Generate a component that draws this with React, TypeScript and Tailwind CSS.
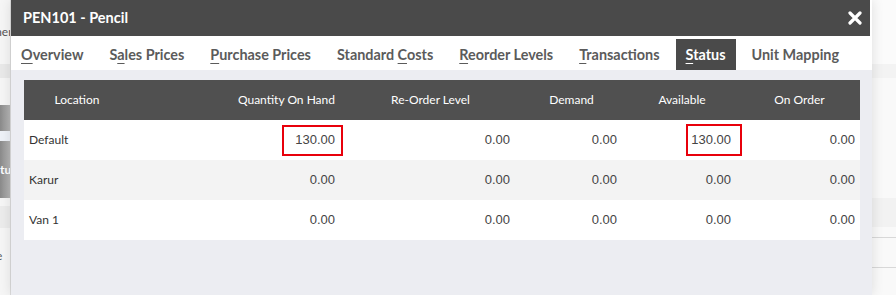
import React from "react";

const rows = [
  { name: "Default", qty: "130.00", reorder: "0.00", demand: "0.00", available: "130.00", onOrder: "0.00", mark: true },
  { name: "Karur", qty: "0.00", reorder: "0.00", demand: "0.00", available: "0.00", onOrder: "0.00", mark: false },
  { name: "Van 1", qty: "0.00", reorder: "0.00", demand: "0.00", available: "0.00", onOrder: "0.00", mark: false },
];

function Tab({ label, u, rest, pre = "", active = false }: { label?: string; u?: string; rest?: string; pre?: string; active?: boolean }) {
  return (
    <div
      className={`h-[31px] px-[10px] flex items-center text-[14.4px] font-bold ${
        active ? "bg-[#4a4a4a] text-white" : "text-[#5b5b5b]"
      }`}
    >
      {label ? (
        label
      ) : (
        <span>
          {pre}
          <span className="underline underline-offset-[3px]">{u}</span>
          {rest}
        </span>
      )}
    </div>
  );
}

export default function App() {
  const num = "font-['Liberation_Sans',Arial,sans-serif] text-[13px] text-[#444]";
  const head = "h-[40px] bg-[#505050] text-white text-[12px] flex items-center";
  return (
    <div className="w-[896px] h-[295px] flex overflow-hidden bg-white font-['Lato','Noto_Sans',sans-serif]">
      {/* page behind the dialog, left edge */}
      <div className="w-[11px] flex flex-col bg-[#f6f6f6] border-r border-[#dcdcdc] text-[12px] text-[#555] overflow-hidden">
        <div className="h-[24px]"></div>
        <div className="h-[16px] leading-[16px] -ml-[8px]">men</div>
        <div className="h-[24px]"></div>
        <div className="h-[14px] bg-[#e9e9e9]"></div>
        <div className="h-[27px]"></div>
        <div className="h-[26px] bg-gradient-to-r from-[#8a8a8a] to-[#b5b5b5]"></div>
        <div className="h-[10px] bg-[#eef2f8]"></div>
        <div className="h-[57px] bg-gradient-to-r from-[#8a8a8a] to-[#b5b5b5] flex items-center text-white font-bold">
          <span className="-ml-[6px]">atu</span>
        </div>
        <div className="h-[8px]"></div>
        <div className="h-[22px] bg-[#ececec]"></div>
        <div className="h-[20px]"></div>
        <div className="leading-[16px] -ml-[4px]">e</div>
      </div>

      {/* dialog */}
      <div className="w-[861px] flex flex-col shadow-[0_0_12px_rgba(0,0,0,0.12)] z-10">
        <div className="h-[36px] bg-[#4a4a4a] flex items-center justify-between pl-[12px] pr-[8px] mr-[2px]">
          <span className="text-white font-bold text-[14.5px]">PEN101 - Pencil</span>
          <svg width="14" height="14" viewBox="0 0 14 14">
            <path d="M2 2 L12 12 M12 2 L2 12" stroke="white" strokeWidth="3.2" strokeLinecap="round" />
          </svg>
        </div>
        <div className="h-[34px] bg-white flex items-end gap-[6px]">
          <Tab u="O" rest="verview" />
          <Tab pre="S" u="a" rest="les Prices" />
          <Tab u="P" rest="urchase Prices" />
          <Tab pre="Standard " u="C" rest="osts" />
          <Tab u="R" rest="eorder Levels" />
          <Tab u="T" rest="ransactions" />
          <Tab u="S" rest="tatus" active />
          <Tab label="Unit Mapping" />
        </div>
        <div className="flex-1 bg-[#ecedf2] pt-[10px] pl-[13px] pr-[12px]">
          <div className="grid grid-cols-[106px_213px_175px_107px_114px_121px]">
            <div className={`${head} justify-center`}>Location</div>
            <div className={`${head} justify-end pr-[8px]`}>Quantity On Hand</div>
            <div className={`${head} justify-center`}>Re-Order Level</div>
            <div className={`${head} justify-center`}>Demand</div>
            <div className={`${head} justify-center`}>Available</div>
            <div className={`${head} justify-center`}>On Order</div>
            {rows.map((r, i) => {
              const bg = i % 2 === 1 ? "bg-[#f3f3f3]" : "bg-white";
              return (
                <React.Fragment key={r.name}>
                  <div className={`h-[40px] ${bg} flex items-center pl-[5px] text-[12px] text-[#333]`}>{r.name}</div>
                  <div className={`h-[40px] ${bg} flex items-center justify-end pr-[8px] ${num}`}>
                    {r.mark ? (
                      <span className="relative z-10 border-2 border-[#e8000b] h-[31px] w-[61px] flex items-center justify-end pr-[6px] mr-[-8px]">
                        {r.qty}
                      </span>
                    ) : (
                      r.qty
                    )}
                  </div>
                  <div className={`h-[40px] ${bg} flex items-center justify-end pr-[8px] ${num}`}>{r.reorder}</div>
                  <div className={`h-[40px] ${bg} flex items-center justify-end pr-[8px] ${num}`}>{r.demand}</div>
                  <div className={`h-[40px] ${bg} flex items-center justify-end pr-[8px] ${num}`}>
                    {r.mark ? (
                      <span className="relative z-10 border-2 border-[#e8000b] h-[32px] w-[56px] flex items-center justify-end pr-[9px] mr-[-11px]">
                        {r.available}
                      </span>
                    ) : (
                      r.available
                    )}
                  </div>
                  <div className={`h-[40px] ${bg} flex items-center justify-end pr-[5px] ${num}`}>{r.onOrder}</div>
                </React.Fragment>
              );
            })}
          </div>
        </div>
      </div>

      {/* page behind the dialog, right edge */}
      <div className="flex-1 flex flex-col bg-[#f9f9f9]">
        <div className="h-[64px] bg-[#fbfbfb]"></div>
        <div className="h-[14px] bg-[#f3f3f3]"></div>
        <div className="h-[120px]"></div>
        <div className="h-[29px] bg-[#f2f2f2]"></div>
        <div className="h-[10px]"></div>
        <div className="h-[1px] bg-[#d8d8d8]"></div>
        <div className="h-[29px]"></div>
        <div className="h-[1px] bg-[#d8d8d8]"></div>
      </div>
    </div>
  );
}
